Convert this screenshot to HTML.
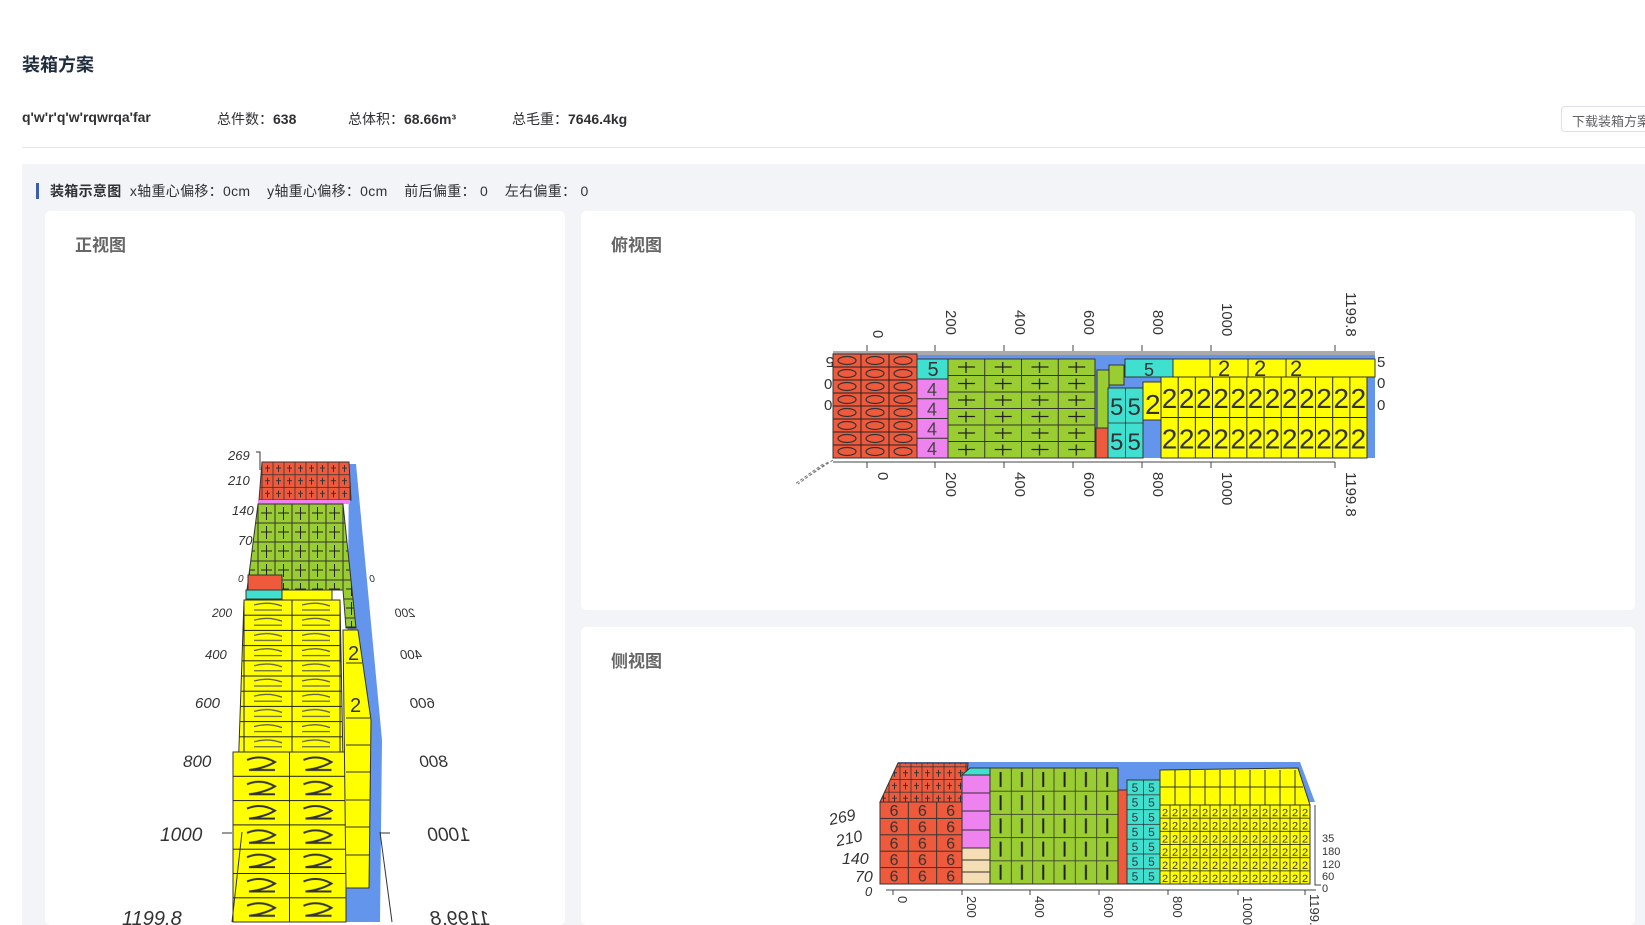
<!DOCTYPE html>
<html><head><meta charset="utf-8">
<style>
*{margin:0;padding:0;box-sizing:border-box}
body{width:1645px;height:925px;overflow:hidden;background:#fff;font-family:"Liberation Sans","Noto Sans CJK SC",sans-serif;color:#303133;position:relative}
.abs{position:absolute;white-space:nowrap}
.title{left:22px;top:51px;font-size:18px;font-weight:bold;color:#1f2d3d}
.stat{top:109px;font-size:14px;color:#303133}
.stat b{font-weight:bold}
.btn{left:1561px;top:106px;width:120px;height:26px;border:1px solid #dcdfe6;border-radius:4px;font-size:13px;color:#606266;padding:4px 0 0 10px;background:#fff}
.line{left:22px;top:147px;width:1623px;height:1px;background:#e4e7ed}
.panel{left:22px;top:164px;width:1623px;height:761px;background:#f3f4f8}
.leg{left:36px;top:181px;font-size:14px;color:#303133;letter-spacing:0.3px}
.leg i{display:inline-block;width:3px;height:16px;background:#3a5fa8;vertical-align:-3px;margin-right:11px}
.card{background:#fff;border-radius:5px}
.ct{font-size:17px;font-weight:bold;color:#666}
svg text{font-family:"Liberation Sans",sans-serif}
</style></head><body>
<div class="abs title">装箱方案</div>
<div class="abs stat" style="left:22px"><b>q'w'r'q'w'rqwrqa'far</b></div>
<div class="abs stat" style="left:217px">总件数：<b>638</b></div>
<div class="abs stat" style="left:348px">总体积：<b>68.66m³</b></div>
<div class="abs stat" style="left:512px">总毛重：<b>7646.4kg</b></div>
<div class="abs btn">下载装箱方案</div>
<div class="abs line"></div>
<div class="abs panel"></div>
<div class="abs leg"><i></i><b>装箱示意图</b>&nbsp; x轴重心偏移：0cm&nbsp;&nbsp;&nbsp; y轴重心偏移：0cm&nbsp;&nbsp;&nbsp; 前后偏重：&nbsp;0&nbsp;&nbsp;&nbsp; 左右偏重：&nbsp;0</div>
<div class="abs card" style="left:45px;top:211px;width:520px;height:714px"></div>
<div class="abs card" style="left:581px;top:211px;width:1054px;height:399px"></div>
<div class="abs card" style="left:581px;top:627px;width:1054px;height:298px"></div>
<div class="abs ct" style="left:75px;top:231px">正视图</div>
<div class="abs ct" style="left:611px;top:231px">俯视图</div>
<div class="abs ct" style="left:611px;top:647px">侧视图</div>

<svg class="abs" style="left:0;top:0" width="1645" height="925">
<defs>
<pattern id="pr" x="833" y="354" width="28" height="13" patternUnits="userSpaceOnUse"><rect width="28" height="13" fill="#f05a3c" stroke="#222" stroke-width="1"/><ellipse cx="14" cy="6.5" rx="9" ry="4" fill="none" stroke="#333" stroke-width="1.2"/></pattern>
<pattern id="pg" x="948" y="359" width="36.75" height="16.5" patternUnits="userSpaceOnUse"><rect width="36.75" height="16.5" fill="#9acd32" stroke="#333" stroke-width="1"/><path d="M10 8H27M18 3V14" stroke="#222" stroke-width="1.3"/></pattern>
<pattern id="py" x="1161" y="377" width="17.17" height="40.5" patternUnits="userSpaceOnUse"><rect width="17.17" height="40.5" fill="#ffff00" stroke="#222" stroke-width="1"/><text x="8.6" y="31" font-size="28" text-anchor="middle" fill="#333">2</text></pattern>
<pattern id="pp" x="917" y="379" width="31" height="19.75" patternUnits="userSpaceOnUse"><rect width="31" height="19.75" fill="#ee82ee" stroke="#333" stroke-width="1"/><text x="15" y="17" font-size="18" text-anchor="middle" fill="#444">4</text></pattern>
<pattern id="pyf" x="233" y="752" width="56.5" height="24.3" patternUnits="userSpaceOnUse"><rect width="56.5" height="24.3" fill="#ffff00" stroke="#222" stroke-width="1"/><path d="M14 8Q28 2 42 10Q32 16 16 18H42" fill="none" stroke="#333" stroke-width="2"/></pattern>
<pattern id="pyt" x="244" y="600" width="48" height="15.2" patternUnits="userSpaceOnUse"><rect width="48" height="15.2" fill="#ffff00" stroke="#222" stroke-width="1"/><path d="M10 5Q24 1 38 6M10 10H38" fill="none" stroke="#555" stroke-width="1.2"/></pattern>
<pattern id="pfr" x="262" y="462" width="11" height="12.7" patternUnits="userSpaceOnUse"><rect width="11" height="12.7" fill="#f05a3c" stroke="#333" stroke-width="0.8"/><path d="M3 6H8M5.5 3V10" stroke="#333"/></pattern>
<pattern id="pfg" x="258" y="504" width="17" height="19" patternUnits="userSpaceOnUse"><rect width="17" height="19" fill="#9acd32" stroke="#333" stroke-width="1"/><path d="M3 9H14M8.5 3V16" stroke="#222"/></pattern>
<pattern id="psr" x="880" y="802" width="28.33" height="16.4" patternUnits="userSpaceOnUse"><rect width="28.33" height="16.4" fill="#f05a3c" stroke="#333" stroke-width="1"/><text x="14" y="14" font-size="16" text-anchor="middle" fill="#333">6</text></pattern>
<pattern id="psg" x="990" y="768" width="21.33" height="23.2" patternUnits="userSpaceOnUse"><rect width="21.33" height="23.2" fill="#9acd32" stroke="#333" stroke-width="0.8"/><path d="M10.6 4V19" stroke="#222" stroke-width="2"/></pattern>
<pattern id="psy" x="1160" y="805" width="10" height="13.17" patternUnits="userSpaceOnUse"><rect width="10" height="13.17" fill="#ffff00" stroke="#222" stroke-width="0.8"/><text x="5" y="11" font-size="11" text-anchor="middle" fill="#333">2</text></pattern>
<pattern id="psc" x="1127" y="780" width="16.5" height="14.8" patternUnits="userSpaceOnUse"><rect width="16.5" height="14.8" fill="#40e0d0" stroke="#333" stroke-width="0.8"/><text x="8" y="12" font-size="12" text-anchor="middle" fill="#333">5</text></pattern>
<pattern id="psc2" x="1108" y="388" width="17.5" height="35" patternUnits="userSpaceOnUse"><rect width="17.5" height="35" fill="#40e0d0" stroke="#333" stroke-width="0.8"/><text x="8.7" y="27" font-size="24" text-anchor="middle" fill="#333">5</text></pattern>
</defs>

<!-- FRONT VIEW -->
<polygon points="349,464 356,464 382,740 380,922 345,922" fill="#6495ed"/>
<polygon points="262,462 349,462 351,500 259,500" fill="url(#pfr)" stroke="#333"/>
<rect x="258" y="500" width="92" height="4" fill="#ee82ee"/>
<polygon points="258,504 343,504 356,628 346,628 343,590 247,590" fill="url(#pfg)" stroke="#333"/>
<rect x="248" y="575" width="34" height="15" fill="#f05a3c" stroke="#333"/>
<rect x="246" y="590" width="36" height="9" fill="#40e0d0" stroke="#333"/>
<rect x="282" y="590" width="50" height="10" fill="#ffff00" stroke="#333"/>
<polygon points="244,600 340,600 346,922 233,922" fill="url(#pyt)" stroke="#333"/>
<polygon points="233,752 346,752 346,922 233,922" fill="url(#pyf)" stroke="#333"/>
<polygon points="343,630 358,630 371,720 369,888 346,888" fill="#ffff00" stroke="#333"/>
<path d="M346 663H362M346 718H370M346 745H370M346 772H370M346 800H370M346 827H370M346 855H370" stroke="#333"/>
<g font-size="20" fill="#333"><text x="348" y="660">2</text><text x="350" y="712">2</text></g>
<g font-size="13" fill="#333" font-style="italic">
<text x="228" y="460">269</text><text x="228" y="485">210</text><text x="232" y="515">140</text><text x="238" y="545">70</text><text x="238" y="582" font-size="10">0</text>
<text x="212" y="617" font-size="12">200</text><text x="205" y="659" font-size="13">400</text><text x="195" y="708" font-size="15">600</text><text x="183" y="767" font-size="17">800</text><text x="160" y="841" font-size="19">1000</text><text x="122" y="925" font-size="20">1199.8</text>
</g>
<g font-size="13" fill="#333" font-style="italic" transform="scale(-1,1)">
<text x="-375" y="582" font-size="10">0</text><text x="-415" y="617" font-size="12">200</text><text x="-422" y="659">400</text><text x="-435" y="708" font-size="15">600</text><text x="-448" y="767" font-size="17">800</text><text x="-470" y="841" font-size="19">1000</text><text x="-490" y="925" font-size="20">1199.8</text>
</g>
<path d="M256,452h4v18M222,833h10M232,922l10,-90M390,833h-10M392,922l-12,-90" stroke="#333" fill="none"/>

<!-- TOP VIEW -->
<rect x="833" y="351" width="542" height="4" fill="#aaa"/>
<rect x="833" y="355" width="542" height="103" fill="#6495ed"/>
<path d="M867 351v-6M935 351v-6M1004 351v-6M1073 351v-6M1142 351v-6M1211 351v-6M1335 351v-6M833 462h502M867 462v6M935 462v6M1004 462v6M1073 462v6M1142 462v6M1211 462v6M1335 462v6" stroke="#444"/>
<rect x="833" y="354" width="84" height="104" fill="url(#pr)" stroke="#333"/>
<rect x="917" y="359" width="32" height="20" fill="#40e0d0" stroke="#333"/>
<text x="933" y="376" font-size="20" text-anchor="middle" fill="#333">5</text>
<rect x="917" y="379" width="31" height="79" fill="url(#pp)" stroke="#333"/>
<rect x="948" y="359" width="147" height="99" fill="url(#pg)" stroke="#333"/>
<rect x="1097" y="370" width="12" height="88" fill="#9acd32" stroke="#333"/>
<rect x="1109" y="365" width="15" height="20" fill="#9acd32" stroke="#333"/>
<rect x="1096" y="428" width="12" height="30" fill="#f05a3c" stroke="#333"/>
<rect x="1108" y="388" width="35" height="70" fill="url(#psc2)" stroke="#333"/>
<rect x="1125" y="359" width="48" height="18" fill="#40e0d0" stroke="#333"/>
<text x="1149" y="376" font-size="18" text-anchor="middle" fill="#333">5</text>
<rect x="1143" y="382" width="18" height="38" fill="#ffff00" stroke="#333"/>
<text x="1145" y="414" font-size="28" fill="#333">2</text>
<rect x="1173" y="359" width="202" height="18" fill="#ffff00" stroke="#333"/>
<path d="M1210 359v18M1248 359v18M1286 359v18" stroke="#333"/>
<text x="1218" y="376" font-size="22" fill="#333">2</text><text x="1254" y="376" font-size="22" fill="#333">2</text><text x="1290" y="376" font-size="22" fill="#333">2</text>
<rect x="1161" y="377" width="206" height="81" fill="url(#py)" stroke="#333"/>
<g font-size="15" fill="#333">
<text transform="translate(873,330) rotate(90)">0</text>
<text transform="translate(946,310) rotate(90)">200</text>
<text transform="translate(1015,310) rotate(90)">400</text>
<text transform="translate(1084,310) rotate(90)">600</text>
<text transform="translate(1153,310) rotate(90)">800</text>
<text transform="translate(1222,303) rotate(90)">1000</text>
<text transform="translate(1346,292) rotate(90)">1199.8</text>
<text transform="translate(878,472) rotate(90)">0</text>
<text transform="translate(946,472) rotate(90)">200</text>
<text transform="translate(1015,472) rotate(90)">400</text>
<text transform="translate(1084,472) rotate(90)">600</text>
<text transform="translate(1153,472) rotate(90)">800</text>
<text transform="translate(1222,472) rotate(90)">1000</text>
<text transform="translate(1346,472) rotate(90)">1199.8</text>
<text x="1377" y="367">5</text><text x="1377" y="388">0</text><text x="1377" y="410">0</text>
<text x="824" y="367" transform="rotate(180 829 362)">5</text><text x="824" y="389">0</text><text x="824" y="410">0</text>
</g>
<path d="M833 460l-30 20M828 462l-30 22M823 464l-28 20" stroke="#777" stroke-dasharray="3,2" fill="none"/>

<!-- SIDE VIEW -->
<polygon points="898,762 1300,762 1315,802 880,802" fill="#6495ed"/>
<polygon points="898,763 968,763 965,802 880,802" fill="url(#pfr)" stroke="#333"/>
<rect x="880" y="802" width="85" height="82" fill="url(#psr)" stroke="#333"/>
<polygon points="970,768 992,768 990,775 962,775" fill="#40e0d0" stroke="#333"/>
<rect x="962" y="775" width="28" height="73" fill="#ee82ee" stroke="#333"/>
<path d="M962 793h28M962 811h28M962 830h28" stroke="#333"/>
<rect x="962" y="848" width="30" height="36" fill="#f5deb3" stroke="#333"/>
<path d="M962 860h30M962 872h30" stroke="#333"/>
<rect x="990" y="768" width="128" height="116" fill="url(#psg)" stroke="#333"/>
<rect x="1118" y="790" width="9" height="94" fill="#f05a3c" stroke="#333"/>
<rect x="1127" y="780" width="33" height="104" fill="url(#psc)" stroke="#333"/>
<polygon points="1160,770 1298,768 1310,805 1160,805" fill="#ffff00" stroke="#333"/>
<path d="M1160 787h143M1175 770v35M1190 770v35M1205 770v35M1220 770v35M1235 770v35M1250 770v35M1265 770v35M1280 770v35M1295 770v35" stroke="#333"/>
<rect x="1160" y="805" width="150" height="79" fill="url(#psy)" stroke="#333"/>
<path d="M886 890h430M893 890v5M962 890v5M1030 890v5M1099 890v5M1168 890v5M1238 890v5M1305 890v5M1315 805v80h6" stroke="#444" fill="none"/>
<g font-size="13" fill="#333">
<text transform="translate(898,896) rotate(90)">0</text>
<text transform="translate(967,896) rotate(90)">200</text>
<text transform="translate(1035,896) rotate(90)">400</text>
<text transform="translate(1104,896) rotate(90)">600</text>
<text transform="translate(1173,896) rotate(90)">800</text>
<text transform="translate(1243,896) rotate(90)">1000</text>
<text transform="translate(1310,894) rotate(90)">1199.8</text>
<g font-style="italic" font-size="16"><text x="829" y="823" transform="rotate(-12 840 818)">269</text><text x="836" y="844" transform="rotate(-12 848 840)">210</text><text x="842" y="864">140</text><text x="855" y="882">70</text><text x="865" y="896" font-size="13">0</text></g>
<g font-size="11"><text x="1322" y="842">35</text><text x="1322" y="855">180</text><text x="1322" y="868">120</text><text x="1322" y="880">60</text><text x="1322" y="892">0</text></g>
</g>
</svg>
</body></html>
